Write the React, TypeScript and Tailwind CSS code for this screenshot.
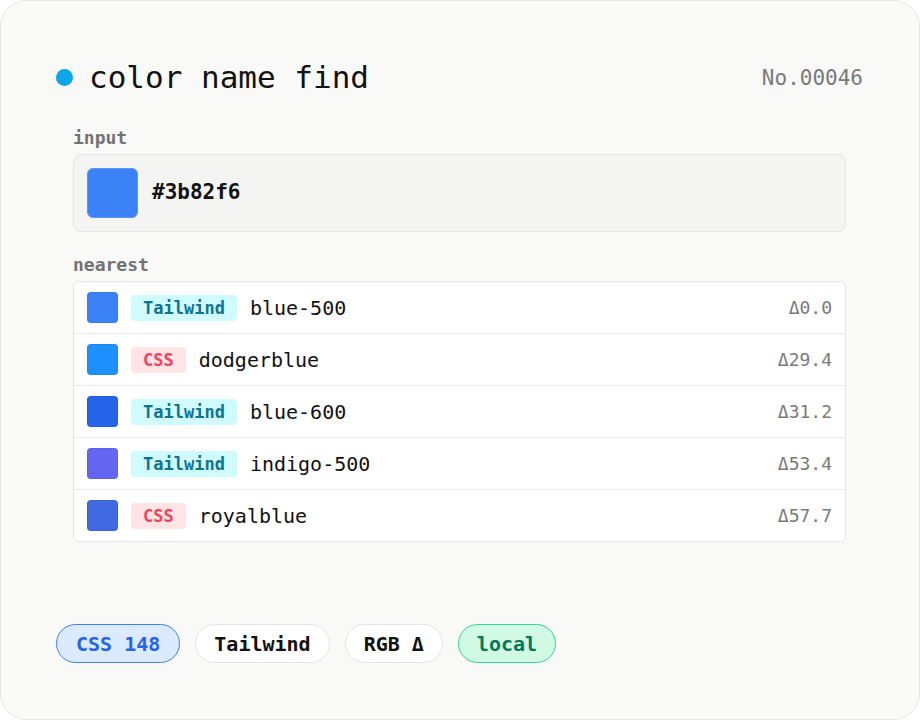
import { Fragment } from 'react'

type Match = {
  hex: string
  source: 'Tailwind' | 'CSS'
  name: string
  delta: string
}

const MATCHES: Match[] = [
  { hex: '#3b82f6', source: 'Tailwind', name: 'blue-500', delta: '0.0' },
  { hex: '#1e90ff', source: 'CSS', name: 'dodgerblue', delta: '29.4' },
  { hex: '#2563eb', source: 'Tailwind', name: 'blue-600', delta: '31.2' },
  { hex: '#6366f1', source: 'Tailwind', name: 'indigo-500', delta: '53.4' },
  { hex: '#4169e1', source: 'CSS', name: 'royalblue', delta: '57.7' },
]

const mono = { fontFamily: '"DejaVu Sans Mono", "Liberation Mono", monospace' }

export default function App() {
  return (
    <div className="w-[920px] h-[720px] bg-white" style={mono}>
      <div className="h-[720px] flex flex-col bg-[#f9f9f8] border border-[#e6e6e4] rounded-[26px] pl-[55px] pr-[56px] pt-[58px] pb-[56px]">
        {/* Header */}
        <div className="flex items-center h-[36px]">
          <span className="w-[17px] h-[17px] rounded-full bg-[#0ea5e9] shrink-0" />
          <h1 className="ml-[16px] text-[31px] leading-none text-[#111111]">color name find</h1>
          <span className="ml-auto mt-[3px] text-[21px] text-[#7a7a7a]">No.00046</span>
        </div>

        <div className="mx-[17px]">
          {/* Input */}
          <div className="mt-[30px] h-[24px] flex items-center text-[18px] font-bold text-[#737373]">input</div>
          <div className="mt-[5px] h-[78px] flex items-center bg-[#f4f4f3] border border-[#e4e4e7] rounded-[8px] px-[13px]">
            <span className="w-[51px] h-[50px] rounded-[6px] bg-[#3b82f6] border border-[#5b95f7]" />
            <span className="ml-[14px] text-[21px] font-bold text-[#111111]">#3b82f6</span>
          </div>

          {/* Nearest */}
          <div className="mt-[20px] h-[24px] flex items-center text-[18px] font-bold text-[#737373]">nearest</div>
          <div className="mt-[5px] bg-white border border-[#e4e4e7] rounded-[6px]">
            {MATCHES.map((m, i) => (
              <Fragment key={m.name}>
                {i > 0 && <div className="h-px bg-[#e8e8ea]" />}
                <div className="h-[51px] flex items-center px-[13px]">
                  <span className="w-[31px] h-[31px] rounded-[4px] border border-black/5" style={{ backgroundColor: m.hex }} />
                  <span
                    className={`ml-[13px] h-[26px] flex items-center pt-[2px] px-[12px] rounded-[4px] text-[17px] font-bold ${
                      m.source === 'Tailwind' ? 'bg-[#cffafe] text-[#0e7490]' : 'bg-[#ffe4e6] text-[#f43f5e]'
                    }`}
                  >
                    {m.source}
                  </span>
                  <span className="ml-[13px] text-[20px] text-[#111111]">{m.name}</span>
                  <span className="ml-auto text-[18px] text-[#7a7a7a]">Δ{m.delta}</span>
                </div>
              </Fragment>
            ))}
          </div>
        </div>

        {/* Tags */}
        <div className="mt-auto flex items-center gap-[15px]">
          <span className="h-[39px] flex items-center px-[19px] rounded-full bg-[#dbeafe] border border-[#3b82f6] text-[20px] font-bold text-[#2563eb]">CSS 148</span>
          <span className="h-[39px] flex items-center px-[18px] rounded-full bg-white border border-[#e5e5e5] text-[20px] font-bold text-[#111111]">Tailwind</span>
          <span className="h-[39px] flex items-center px-[18px] rounded-full bg-white border border-[#e5e5e5] text-[20px] font-bold text-[#111111]">RGB Δ</span>
          <span className="h-[39px] flex items-center px-[18px] rounded-full bg-[#d1fae5] border border-[#34d399] text-[20px] font-bold text-[#047857]">local</span>
        </div>
      </div>
    </div>
  )
}
